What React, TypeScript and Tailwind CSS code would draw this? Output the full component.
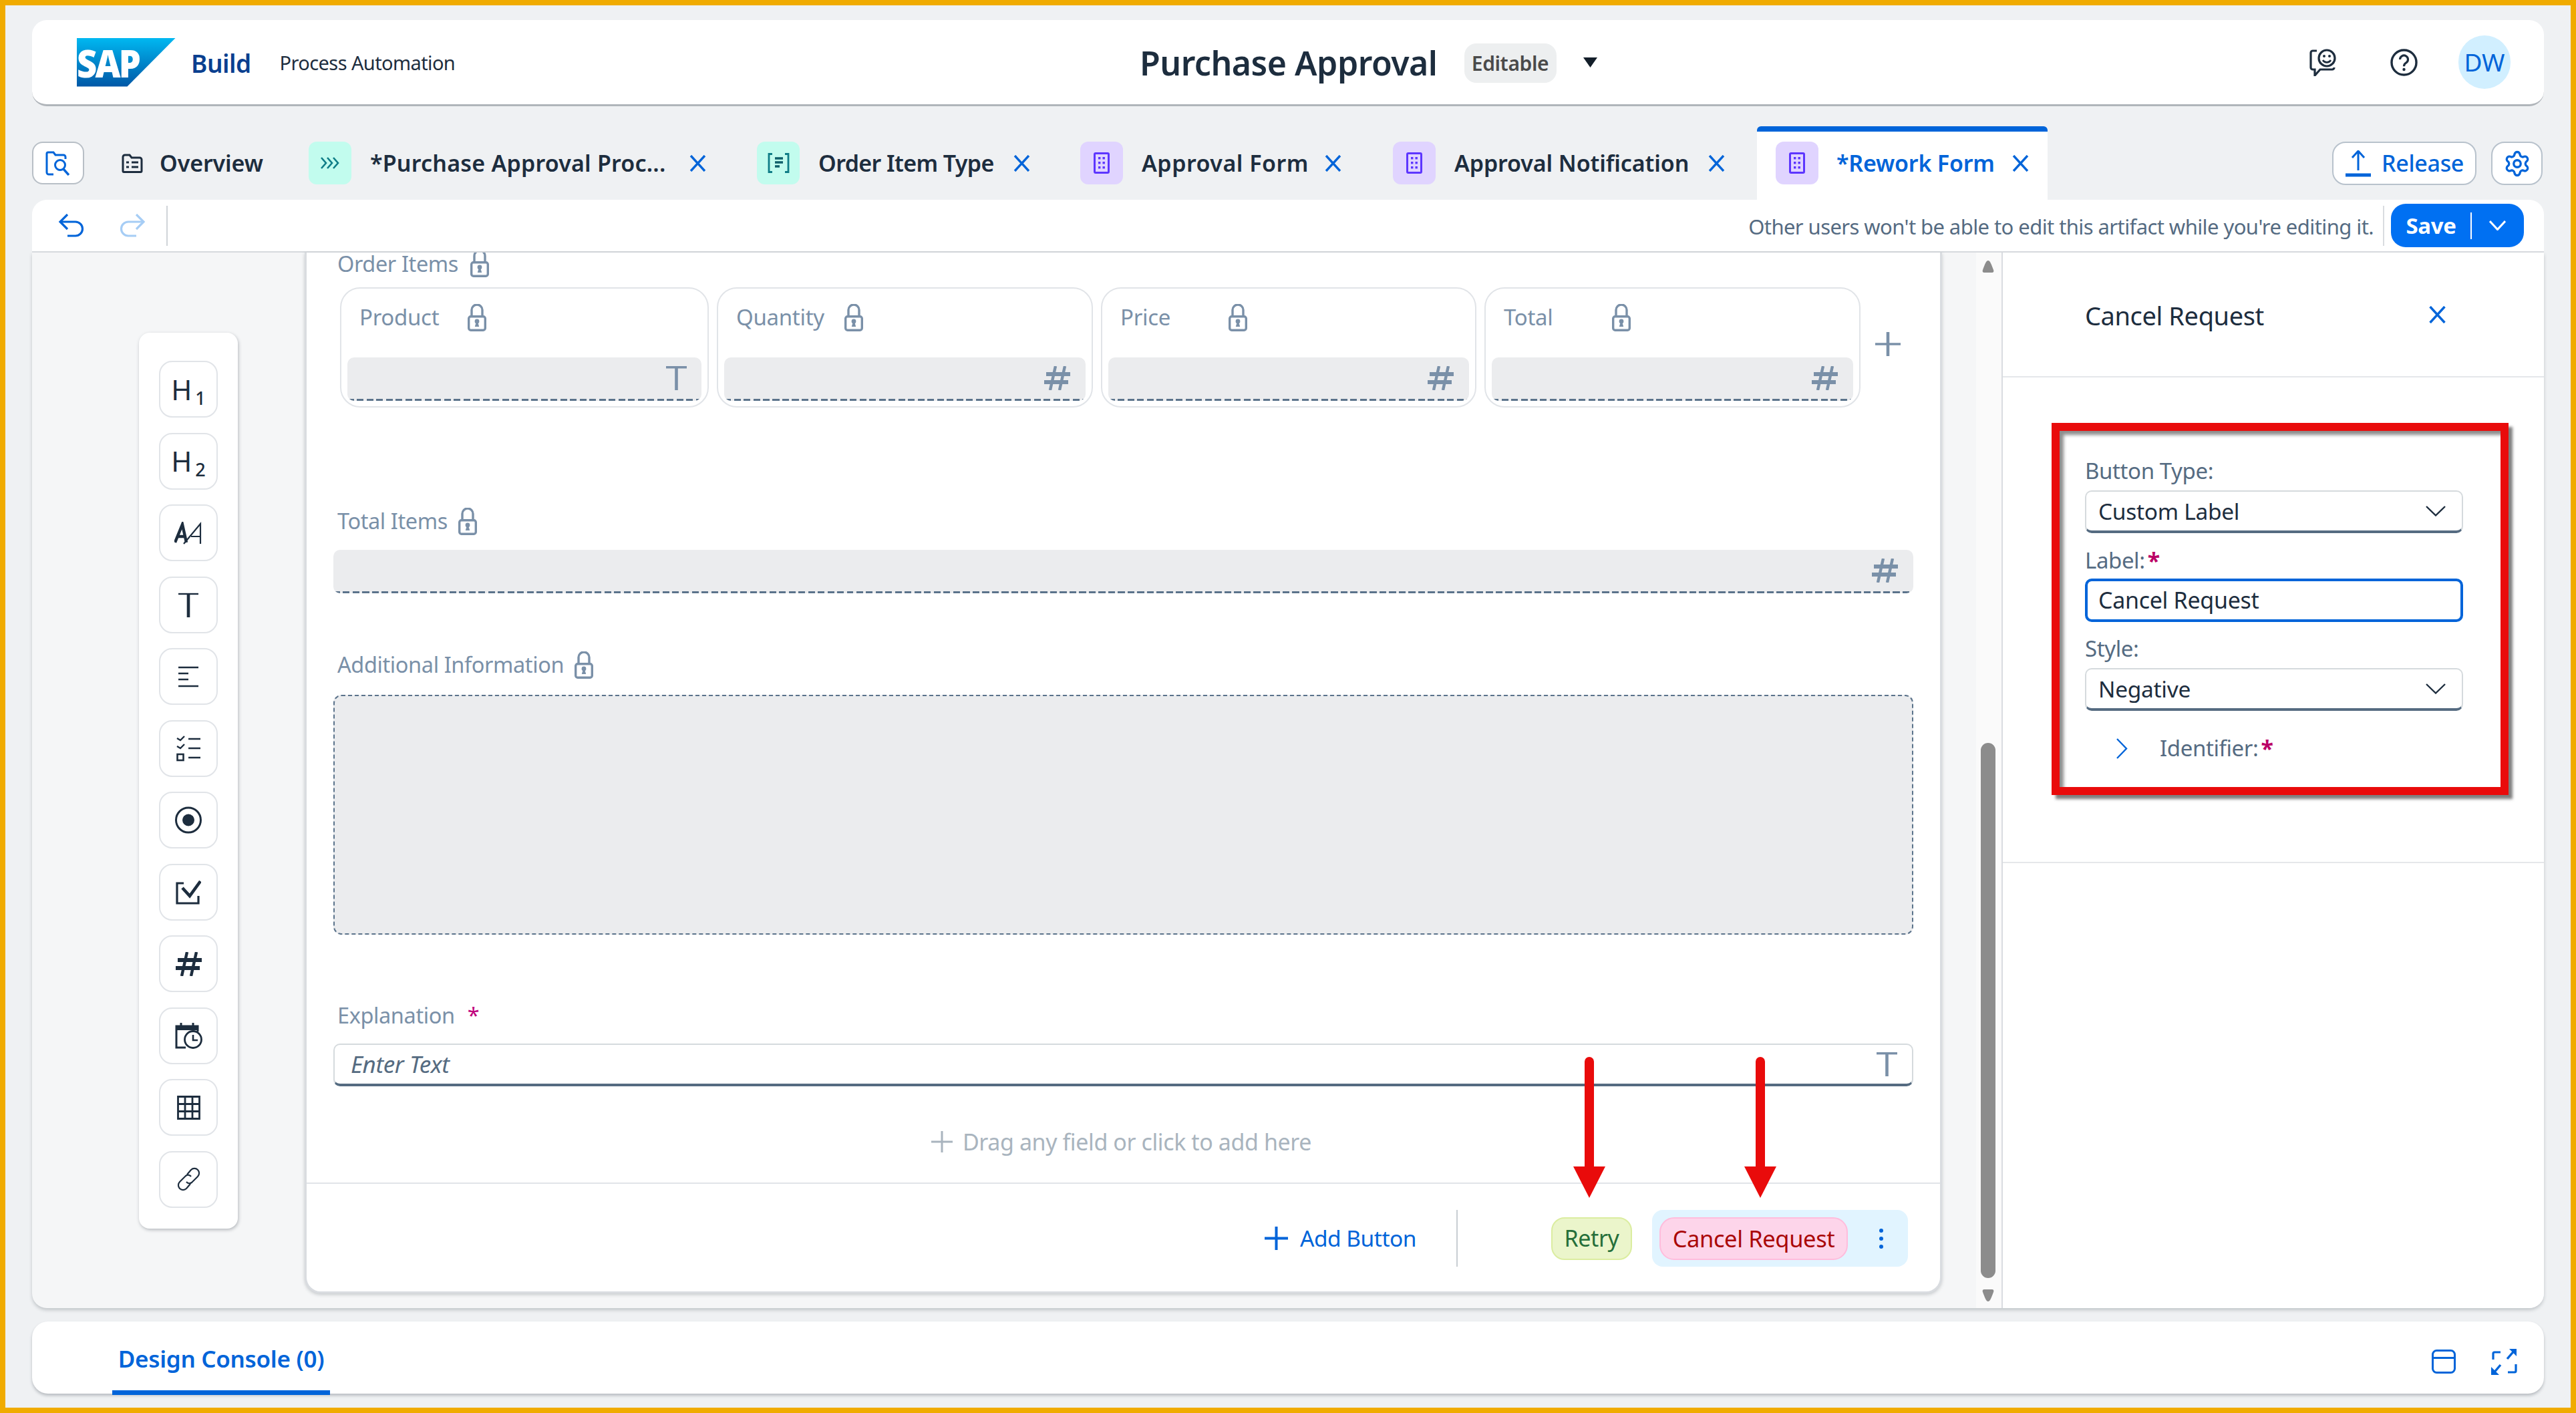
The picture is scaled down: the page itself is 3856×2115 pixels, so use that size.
import type { ReactNode } from 'react';
import { Settings } from 'lucide-react';

const INK = '#1d2d3e';
const BLUE = '#0064d9';
const SLATE = '#7a90a8';

function Svg({ w, h, vb, children, className }: { w: number; h: number; vb?: string; children: ReactNode; className?: string }) {
  return (
    <svg width={w} height={h} viewBox={vb ?? `0 0 ${w} ${h}`} fill="none" className={`shrink-0 ${className ?? ''}`}>
      {children}
    </svg>
  );
}

function CloseX({ color = BLUE, w = 25, h = 25 }: { color?: string; w?: number; h?: number }) {
  return (
    <Svg w={w} h={h} vb="0 0 25 25">
      <path d="M2 1l21 23M23 1L2 24" stroke={color} strokeWidth="3.4" />
    </Svg>
  );
}

function Lock() {
  return (
    <Svg w={28} h={41} vb="0 0 28 41">
      <path d="M6 19V9a8 8 0 0 1 16 0v10" stroke={SLATE} strokeWidth="3.4" />
      <rect x="1.7" y="18.7" width="24.6" height="20.6" rx="3" stroke={SLATE} strokeWidth="3.4" />
      <circle cx="14" cy="26" r="3.4" fill={SLATE} />
      <path d="M12.8 27h2.4l2 7H10.8z" fill={SLATE} />
    </Svg>
  );
}

function TIcon() {
  return (
    <Svg w={31} h={36}>
      <path d="M0 1.7h31" stroke={SLATE} strokeWidth="3.4" />
      <path d="M15.5 1.7V36" stroke={SLATE} strokeWidth="4.6" />
    </Svg>
  );
}

function HashIcon({ color = SLATE }: { color?: string }) {
  return (
    <Svg w={41} h={36}>
      <path d="M18 0L10 36M32 0l-8 36" stroke={color} strokeWidth="4.4" />
      <path d="M4 12h36M1 24h36" stroke={color} strokeWidth="5.8" />
    </Svg>
  );
}

function Caret({ color = INK, w = 30, h = 16, sw = 2.4 }: { color?: string; w?: number; h?: number; sw?: number }) {
  return (
    <Svg w={w} h={h}>
      <path d={`M1 1l${w / 2 - 1} ${h - 2.5} ${w / 2 - 1} ${-(h - 2.5)}`} stroke={color} strokeWidth={sw} />
    </Svg>
  );
}

function Tile({ kind }: { kind: 'flow' | 'type' | 'form' }) {
  if (kind === 'form') {
    return (
      <div className="flex h-[64px] w-[64px] shrink-0 items-center justify-center rounded-[12px] bg-[#e0d4ff]">
        <Svg w={24} h={32}>
          <rect x="1.5" y="1.5" width="21" height="29" rx="1.5" stroke="#5d36ff" strokeWidth="3" />
          <g fill="#5d36ff">
            <rect x="7" y="7" width="3.4" height="3.4" />
            <rect x="13.5" y="7" width="3.4" height="3.4" />
            <rect x="7" y="14" width="3.4" height="3.4" />
            <rect x="13.5" y="14" width="3.4" height="3.4" />
            <rect x="7" y="21" width="3.4" height="3.4" />
            <rect x="13.5" y="21" width="3.4" height="3.4" />
          </g>
        </Svg>
      </div>
    );
  }
  return (
    <div className="flex h-[64px] w-[64px] shrink-0 items-center justify-center rounded-[12px] bg-[#c2fcee]">
      {kind === 'flow' ? (
        <Svg w={30} h={20}>
          <path d="M2 2l7 8-7 8M11 2l7 8-7 8M20 2l7 8-7 8" stroke="#0f7d87" strokeWidth="2.6" />
        </Svg>
      ) : (
        <Svg w={33} h={30}>
          <path d="M7 1.5H2v27h5M26 1.5h5v27h-5" stroke="#0f7d87" strokeWidth="2.8" />
          <path d="M11 8h12M11 14h12M11 20h7" stroke="#0f5f6a" strokeWidth="3.4" />
        </Svg>
      )}
    </div>
  );
}

function Tab({ kind, label, width, className }: { kind: 'flow' | 'type' | 'form'; label: string; width: string; className: string }) {
  return (
    <div className={`flex h-[64px] items-center ${className}`}>
      <Tile kind={kind} />
      <span className={`ml-[28px] whitespace-nowrap text-[34px] font-semibold text-[#1d2d3e] ${width}`}>{label}</span>
      <span className="ml-[28px]">
        <CloseX />
      </span>
    </div>
  );
}

function Header() {
  return (
    <header className="flex h-[129px] shrink-0 items-center rounded-[22px] border-b-[3px] border-[#b0b5ba] bg-white">
      <div className="flex w-[1658px] items-center pl-[67px]">
        <div className="relative h-[73px] w-[148px] shrink-0 bg-gradient-to-b from-[#00b8f1] to-[#0057a6] [clip-path:polygon(0_0,100%_0,51%_100%,0_100%)]">
          <span className="absolute left-[0px] top-[3px] origin-left scale-x-[0.92] text-[57px] font-black leading-[68px] tracking-[-3px] text-white">
            SAP
          </span>
        </div>
        <span className="ml-[23px] mt-[3px] text-[37px] font-semibold tracking-[-0.5px] text-[#0a3f8f]">Build</span>
        <span className="ml-[43px] mt-[2px] text-[29px] tracking-[-0.6px] text-[#1d2d3e]">Process Automation</span>
      </div>
      <span className="mt-[3px] text-[50px] font-semibold tracking-[-0.5px] text-[#1d2d3e]">Purchase Approval</span>
      <span className="ml-[40px] mt-[3px] flex h-[59px] w-[138px] items-center justify-center rounded-[18px] bg-[#edeff0] text-[30px] font-semibold tracking-[-0.4px] text-[#4a4a4a]">
        Editable
      </span>
      <Svg w={21} h={15} className="ml-[40px]">
        <path d="M0 0h21L10.5 15z" fill="#131e29" />
      </Svg>
      <div className="ml-auto flex items-center pr-[50px]">
        <Svg w={41} h={41}>
          <path d="M11 3H5a3 3 0 0 0-3 3v22a3 3 0 0 0 3 3h3v9l8-9h18a3 3 0 0 0 3-3" stroke={INK} strokeWidth="3.2" />
          <circle cx="26" cy="14" r="12" stroke={INK} strokeWidth="3.2" />
          <circle cx="22" cy="11" r="2" fill={INK} />
          <circle cx="30" cy="11" r="2" fill={INK} />
          <path d="M20 17a7 7 0 0 0 12 0" stroke={INK} strokeWidth="2.6" />
        </Svg>
        <Svg w={41} h={41} className="ml-[80px]">
          <circle cx="20.5" cy="20.5" r="18.5" stroke={INK} strokeWidth="3.4" />
          <path d="M14.5 16a6 6 0 1 1 9 5.2c-2 1.2-3 2.4-3 5" stroke={INK} strokeWidth="3.2" />
          <circle cx="20.5" cy="31" r="2.2" fill={INK} />
        </Svg>
        <div className="ml-[61px] flex h-[80px] w-[78px] items-center justify-center rounded-full bg-[#d1efff] text-[37px] text-[#0064d9]">
          DW
        </div>
      </div>
    </header>
  );
}

function TabRow() {
  return (
    <div className="flex h-[140px] shrink-0 items-start pt-[53px]">
      <button className="flex h-[64px] w-[78px] items-center justify-center rounded-[16px] border-2 border-[#b8bfc6] bg-white">
        <Svg w={40} h={37}>
          <path d="M13 35H6a3 3 0 0 1-3-3V4a2 2 0 0 1 2-2h8l3 4h12a3 3 0 0 1 3 3v3" stroke={BLUE} strokeWidth="3" />
          <circle cx="23" cy="21" r="7.5" stroke={BLUE} strokeWidth="3" />
          <path d="M28 27l8 9" stroke={BLUE} strokeWidth="3.4" />
        </Svg>
      </button>
      <div className="ml-[56px] flex h-[64px] w-[280px] items-center">
        <Svg w={32} h={29}>
          <path d="M2 26V5a3 3 0 0 1 3-3h7l3 4h12a3 3 0 0 1 3 3v17a1.5 1.5 0 0 1-1.5 1.5h-25A1.5 1.5 0 0 1 2 26z" stroke={INK} strokeWidth="3" />
          <path d="M7 13h4M15 13h10M7 20h4M15 20h10" stroke={INK} strokeWidth="3" />
        </Svg>
        <span className="ml-[25px] text-[34px] font-semibold tracking-[-0.1px] text-[#1d2d3e]">Overview</span>
      </div>
      <Tab kind="flow" label="*Purchase Approval Proc..." width="w-[450px] tracking-[0.2px]" className="" />
      <Tab kind="type" label="Order Item Type" width="w-[264px] tracking-[-0.6px]" className="ml-[76px]" />
      <Tab kind="form" label="Approval Form" width="w-[246px] tracking-[0.5px]" className="ml-[75px]" />
      <Tab kind="form" label="Approval Notification" width="w-[352px] tracking-[-0.1px]" className="ml-[77px]" />
      <div className="ml-[48px] -mt-[23px] flex h-[110px] w-[435px] items-start rounded-t-[6px] border-t-8 border-[#0064d9] bg-white px-[28px] pt-[15px]">
        <Tile kind="form" />
        <span className="ml-[27px] w-[235px] whitespace-nowrap text-[34px] font-semibold leading-[64px] tracking-[-0.2px] text-[#0064d9]">*Rework Form</span>
        <span className="ml-[28px] mt-[20px]">
          <CloseX />
        </span>
      </div>
      <button className="ml-auto flex h-[65px] w-[216px] items-center rounded-[20px] border-2 border-[#b8c2cc] bg-white pl-[17px]">
        <Svg w={40} h={40}>
          <path d="M20 1v29M11 11l9-10 9 10" stroke={BLUE} strokeWidth="3" />
          <path d="M1 37h38" stroke={BLUE} strokeWidth="5" />
        </Svg>
        <span className="ml-[15px] text-[34px] font-medium tracking-[-0.3px] text-[#0064d9]">Release</span>
      </button>
      <button className="ml-[22px] mr-[2px] flex h-[65px] w-[77px] items-center justify-center rounded-[20px] border-2 border-[#b8c2cc] bg-white">
        <Settings size={42} strokeWidth={1.9} color={BLUE} />
      </button>
    </div>
  );
}

function Toolbar() {
  return (
    <div className="flex h-[79px] shrink-0 items-center rounded-t-[22px] border-b-2 border-[#d9dce0] bg-white pl-[39px] pr-[30px]">
      <Svg w={40} h={35}>
        <path d="M14 1L3 12l11 11" stroke={BLUE} strokeWidth="3.2" />
        <path d="M3 12h23a10.5 10.5 0 0 1 0 21H14" stroke={BLUE} strokeWidth="3.2" />
      </Svg>
      <Svg w={40} h={35} className="ml-[51px]">
        <path d="M26 1l11 11-11 11" stroke="#a6cdf5" strokeWidth="3.2" />
        <path d="M37 12H14a10.5 10.5 0 0 0 0 21h12" stroke="#a6cdf5" strokeWidth="3.2" />
      </Svg>
      <span className="ml-[31px] h-[60px] w-[2px] bg-[#d0d4d8]" />
      <span className="ml-auto mt-[3px] whitespace-nowrap text-[31px] tracking-[-0.58px] text-[#556b82]">
        Other users won't be able to edit this artifact while you're editing it.
      </span>
      <span className="ml-[14px] h-[60px] w-[2px] bg-[#d9dce0]" />
      <button className="ml-[10px] flex h-[65px] w-[199px] items-center rounded-[22px] bg-[#0070f2] pl-[19px] text-white">
        <span className="w-[82px] text-[33px] font-bold tracking-[-0.4px]">Save</span>
        <span className="ml-[18px] h-[40px] w-[2px] bg-white" />
        <span className="ml-[26px]">
          <Caret color="#ffffff" w={25} h={15} sw={3} />
        </span>
      </button>
    </div>
  );
}

const paletteIcons: ReactNode[] = [
  <span key="h1" className="flex items-end text-[42px] leading-none text-[#1d2d3e]">
    H<span className="mb-[-5px] ml-[5px] text-[27px] font-medium">1</span>
  </span>,
  <span key="h2" className="flex items-end text-[42px] leading-none text-[#1d2d3e]">
    H<span className="mb-[-5px] ml-[5px] text-[27px] font-medium">2</span>
  </span>,
  <Svg key="aa" w={42} h={34}>
    <path d="M1 31L12 4l6 27M5 22h11" stroke={INK} strokeWidth="4.4" />
    <path d="M14 33L39 3v30M25 22h14" stroke={INK} strokeWidth="2.2" />
  </Svg>,
  <Svg key="t" w={30} h={37}>
    <path d="M0 2h30" stroke={INK} strokeWidth="2.4" />
    <path d="M15 2v35" stroke={INK} strokeWidth="4.6" />
  </Svg>,
  <Svg key="lines" w={30} h={32}>
    <path d="M0 2h30M0 11h15M0 20h15M0 30h30" stroke={INK} strokeWidth="2.6" />
  </Svg>,
  <Svg key="check" w={36} h={40}>
    <path d="M1 5l5 3 6-6M1 17l5 3 6-6" stroke={INK} strokeWidth="2.4" />
    <rect x="1.5" y="29" width="9" height="9" stroke={INK} strokeWidth="2.6" />
    <path d="M18 6h18M18 20h18M18 34h18" stroke={INK} strokeWidth="2.6" />
  </Svg>,
  <Svg key="radio" w={40} h={41}>
    <circle cx="20" cy="20.5" r="18.5" stroke={INK} strokeWidth="3" />
    <circle cx="20" cy="20.5" r="9" fill={INK} />
  </Svg>,
  <Svg key="box" w={38} h={38}>
    <path d="M12 6H2v30h32V25" stroke={INK} strokeWidth="3.2" />
    <path d="M10 13l11 12L37 3" stroke={INK} strokeWidth="4.6" />
  </Svg>,
  <HashIcon key="hash" color={INK} />,
  <Svg key="date" w={41} h={41}>
    <path d="M16 38H2V6h32v8" stroke={INK} strokeWidth="3" />
    <path d="M2 5h32v7H2z" fill={INK} />
    <path d="M9 1v6M27 1v6" stroke={INK} strokeWidth="3" />
    <circle cx="27" cy="26" r="12.5" stroke={INK} strokeWidth="2.8" />
    <path d="M27 19v8h7" stroke={INK} strokeWidth="2.6" />
  </Svg>,
  <Svg key="table" w={35} h={36}>
    <path d="M1.5 1.5h32v33h-32zM12 1.5v33M23 1.5v33M1.5 12.5h32M1.5 23.5h32" stroke={INK} strokeWidth="2.8" />
  </Svg>,
  <Svg key="link" w={35} h={36}>
    <path d="M15 11l6-7a7 7 0 0 1 10 10l-9 9a6 6 0 0 1-8-1" stroke={INK} strokeWidth="2.2" />
    <path d="M20 25l-6 7a7 7 0 0 1-10-10l9-9a6 6 0 0 1 8 1" stroke={INK} strokeWidth="2.2" />
  </Svg>,
];

function Palette() {
  return (
    <div className="ml-[160px] mt-[120px] flex h-[1341px] w-[148px] flex-col items-center gap-[22.5px] rounded-[16px] bg-white pt-[42px] shadow-[1px_2px_5px_rgba(60,70,80,0.35)]">
      {paletteIcons.map((icon, i) => (
        <div key={i} className="flex h-[85px] w-[88px] items-center justify-center rounded-[20px] border-2 border-[#e1e4e8] bg-white">
          {icon}
        </div>
      ))}
    </div>
  );
}

const columns = [
  { label: 'Product', icon: <TIcon />, width: 'w-[552px]' },
  { label: 'Quantity', icon: <HashIcon />, width: 'w-[563px]' },
  { label: 'Price', icon: <HashIcon />, width: 'w-[562px]' },
  { label: 'Total', icon: <HashIcon />, width: 'w-[563px]' },
];

function ColumnCard({ label, icon, width }: { label: string; icon: ReactNode; width: string }) {
  return (
    <div className={`flex h-[180px] flex-col rounded-[30px] border-2 border-[#e1e4e8] px-[9px] ${width}`}>
      <div className="flex h-[103px] items-start pl-[18px] pt-[23px]">
        <span className="w-[162px] text-[33px] leading-[40px] tracking-[-0.3px] text-[#7a90a8]">{label}</span>
        <Lock />
      </div>
      <GreyField icon={icon} />
    </div>
  );
}

function GreyField({ icon }: { icon: ReactNode }) {
  return (
    <div className="flex h-[65px] flex-col overflow-hidden rounded-[10px] bg-[#ebecee]">
      <div className="flex flex-1 items-center justify-end pr-[22px]">{icon}</div>
      <div className="h-[3px] bg-[repeating-linear-gradient(90deg,#5b738b_0_10px,transparent_10px_14.5px)]" />
    </div>
  );
}

function FieldLabel({ children, className }: { children: ReactNode; className: string }) {
  return <div className={`flex items-center pl-[6px] text-[32.5px] leading-[30px] tracking-[-0.4px] text-[#7a90a8] ${className}`}>{children}</div>;
}

function Canvas() {
  return (
    <div className="mb-[22px] flex w-[2451px] shrink-0 flex-col rounded-b-[24px] border-x-[3px] border-b-[3px] border-[#d9dce0] bg-white shadow-[0_2px_5px_rgba(60,70,80,0.25)]">
      <div className="flex flex-col px-[40px]">
        <FieldLabel className="mb-[18px] h-[34px] gap-[18px]">
          Order Items
          {/* the lock is cut by the top of the scrolled area */}
          <span className="flex h-[37px] items-end self-start overflow-hidden">
            <Lock />
          </span>
        </FieldLabel>
        <div className="flex items-center gap-[12px] pl-[10px]">
          {columns.map((c) => (
            <ColumnCard key={c.label} {...c} />
          ))}
          <Svg w={38} h={36} className="ml-[10px] -mt-[10px]">
            <path d="M19 0v36" stroke={SLATE} strokeWidth="4.6" />
            <path d="M0 18h38" stroke={SLATE} strokeWidth="3.6" />
          </Svg>
        </div>
        <FieldLabel className="mt-[150px] h-[40px] gap-[16px]">
          Total Items <Lock />
        </FieldLabel>
        <div className="mt-[23px]">
          <GreyField icon={<HashIcon />} />
        </div>
        <FieldLabel className="mt-[87px] h-[40px] gap-[16px]">
          Additional Information <Lock />
        </FieldLabel>
        <div className="mt-[25px] h-[359px] rounded-[12px] border-2 border-dashed border-[#5b738b] bg-[#ebecee]" />
        <FieldLabel className="mt-[101px] h-[40px]">
          Explanation <span className="ml-[19px] text-[#c0007c]">*</span>
        </FieldLabel>
        <div className="mt-[22px] flex h-[64px] items-center justify-between rounded-[10px] border-2 border-b-[4px] border-[#d5dadd] border-b-[#556b81] bg-white pl-[24px] pr-[22px]">
          <span className="text-[35px] italic tracking-[-0.4px] text-[#556b81]">Enter Text</span>
          <TIcon />
        </div>
        <div className="mt-[63px] flex h-[40px] items-center justify-center gap-[15px] pr-[6px] text-[34px] tracking-[-0.4px] text-[#a9b4be]">
          <Svg w={32} h={32}>
            <path d="M16 0v32M0 16h32" stroke="#a9b4be" strokeWidth="3" />
          </Svg>
          Drag any field or click to add here
        </div>
      </div>
      <div className="mt-[41px] flex flex-1 items-center justify-end border-t-2 border-[#e1e4e8] pr-[48px] pt-[2px]">
        <Svg w={35} h={35}>
          <path d="M17.5 0v35M0 17.5h35" stroke={BLUE} strokeWidth="4" />
        </Svg>
        <span className="ml-[18px] w-[172px] whitespace-nowrap text-[33.5px] tracking-[-0.5px] text-[#0064d9]">Add Button</span>
        <span className="ml-[62px] h-[85px] w-[2px] bg-[#c9ced3]" />
        <button className="ml-[140px] flex h-[64px] w-[121px] items-center justify-center rounded-[20px] border-2 border-[#dbeda0] bg-[#ebf5cb] text-[34px] tracking-[-0.4px] text-[#256f3a]">
          Retry
        </button>
        <div className="ml-[30px] flex h-[85px] w-[383px] items-center rounded-[16px] bg-[#e1f4ff] pl-[11px]">
          <button className="flex h-[64px] w-[282px] items-center justify-center whitespace-nowrap rounded-[22px] border-2 border-[#ffbcdc] bg-[#fdd5ea] text-[34.5px] tracking-[-0.4px] text-[#aa0808]">
            Cancel Request
          </button>
          <Svg w={8} h={32} className="ml-[46px]">
            <circle cx="4" cy="4" r="3" fill={BLUE} />
            <circle cx="4" cy="16" r="3" fill={BLUE} />
            <circle cx="4" cy="28" r="3" fill={BLUE} />
          </Svg>
        </div>
      </div>
    </div>
  );
}

function Scrollbar() {
  return (
    <div className="flex w-[40px] shrink-0 flex-col items-center border-r-2 border-[#d9dce0] bg-[#fafafa] pr-[2px] pt-[12px]">
      <Svg w={22} h={18}>
        <path d="M11 0c3 0 5 6 8 14 1 2 0 4-2 4H5c-2 0-3-2-2-4C6 6 8 0 11 0z" fill="#8c8c8c" />
      </Svg>
      <div className="mt-[704px] h-[801px] w-[22px] rounded-full bg-[#8c8c8c]" />
      <Svg w={22} h={18} className="mt-[17px]">
        <path d="M11 18c-3 0-5-6-8-14C2 2 3 0 5 0h12c2 0 3 2 2 4-3 8-5 14-8 14z" fill="#8c8c8c" />
      </Svg>
    </div>
  );
}

function FormLabel({ children, required }: { children: string; required?: boolean }) {
  return (
    <div className="flex h-[36px] items-center text-[33px] tracking-[-0.4px] text-[#556b82]">
      {children}
      {required && <span className="ml-[4px] text-[34px] font-bold leading-[36px] text-[#bb0066]">*</span>}
    </div>
  );
}

function SelectBox({ value }: { value: string }) {
  return (
    <div className="mt-[11px] flex h-[64px] w-[566px] items-center justify-between rounded-[10px] border-2 border-b-[4px] border-[#d5dadd] border-b-[#556b81] bg-white pl-[18px] pr-[24px] text-[33.5px] tracking-[-0.3px] text-[#1d2d3e]">
      {value}
      <Caret />
    </div>
  );
}

function SidePanel() {
  return (
    <aside className="flex min-w-0 flex-1 flex-col rounded-br-[22px] bg-white">
      <div className="flex h-[187px] shrink-0 items-center justify-between border-b-2 border-[#e5e7ea] pl-[123px] pr-[145px]">
        <span className="mt-[3px] text-[38px] tracking-[-0.4px] text-[#1d2d3e]">Cancel Request</span>
        <CloseX w={29} h={26} />
      </div>
      <div className="h-[727px] shrink-0 border-b-2 border-[#e5e7ea] pl-[73px] pt-[68px]">
        <div className="h-[557px] w-[684px] border-[12px] border-[#e90b0b] pl-[38px] pt-[42px] shadow-[6px_6px_4px_rgba(0,0,0,0.5),inset_6px_6px_5px_rgba(0,0,0,0.45)]">
          <FormLabel>Button Type:</FormLabel>
          <SelectBox value="Custom Label" />
          <div className="mt-[23px]">
            <FormLabel required>Label:</FormLabel>
          </div>
          <div className="mt-[9px] flex h-[65px] w-[566px] items-center rounded-[10px] border-4 border-[#0064d9] pl-[16px] text-[34px] tracking-[-0.3px] text-[#1d2d3e]">
            Cancel Request
          </div>
          <div className="mt-[22px]">
            <FormLabel>Style:</FormLabel>
          </div>
          <SelectBox value="Negative" />
          <div className="ml-[47px] mt-[38px] flex items-center">
            <Svg w={17} h={31}>
              <path d="M1 1l14 14.5L1 30" stroke={BLUE} strokeWidth="2.4" />
            </Svg>
            <span className="ml-[48px]">
              <FormLabel required>Identifier:</FormLabel>
            </span>
          </div>
        </div>
      </div>
    </aside>
  );
}

function ArrowDown({ className }: { className: string }) {
  return (
    <svg width="48" height="211" viewBox="0 0 48 211" className={`absolute ${className}`}>
      <path d="M17 7a7 7 0 0 1 14 0v157h17l-24 47L0 164h17z" fill="#e90b0b" />
    </svg>
  );
}

function BottomPanel() {
  return (
    <div className="mt-[20px] flex h-[108px] shrink-0 items-start rounded-[24px] bg-white shadow-[0_3px_4px_rgba(60,70,80,0.3)]">
      <div className="ml-[120px] flex h-[110px] w-[326px] flex-col items-center border-b-[7px] border-[#0064d9] pt-[33px]">
        <span className="whitespace-nowrap text-[35px] font-semibold leading-[46px] tracking-[-0.3px] text-[#0064d9]">Design Console (0)</span>
      </div>
      <div className="ml-auto mt-[40px] flex items-center gap-[53px] pr-[40px]">
        <Svg w={36} h={36}>
          <rect x="1.5" y="1.5" width="33" height="33" rx="6" stroke={BLUE} strokeWidth="3" />
          <path d="M1.5 12.5h33" stroke={BLUE} strokeWidth="3" />
        </Svg>
        <Svg w={39} h={40}>
          <path d="M3 17V8a2 2 0 0 1 2-2h9M37 24v10a2 2 0 0 1-2 2H25" stroke={BLUE} strokeWidth="3.2" />
          <path d="M24 16l12-14" stroke={BLUE} strokeWidth="3.4" />
          <path d="M27 1h11v11z" fill={BLUE} />
          <path d="M14 25L3 38" stroke={BLUE} strokeWidth="3.4" />
          <path d="M0 28v12h12z" fill={BLUE} />
        </Svg>
      </div>
    </div>
  );
}

export default function App() {
  return (
    <div className="relative flex h-[2115px] w-[3856px] flex-col border-8 border-[#f0ab00] bg-[#eff1f3] px-[40px] pt-[22px] font-['Noto_Sans',sans-serif]">
      <Header />
      <TabRow />
      <Toolbar />
      <div className="flex h-[1580px] shrink-0 rounded-b-[22px] bg-[#f5f6f7] shadow-[0_3px_5px_rgba(60,70,80,0.25)]">
        <div className="w-[408px] shrink-0">
          <Palette />
        </div>
        <Canvas />
        <div className="w-[51px] shrink-0" />
        <Scrollbar />
        <SidePanel />
      </div>
      <BottomPanel />
      <ArrowDown className="left-[2347px] top-[1574px]" />
      <ArrowDown className="left-[2603px] top-[1574px]" />
    </div>
  );
}
